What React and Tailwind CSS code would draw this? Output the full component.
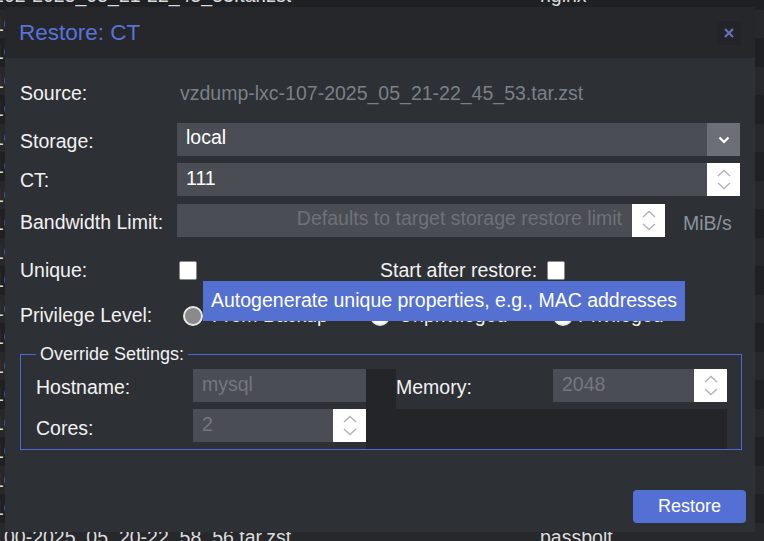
import React from "react";

const rows = [
  ["vzdump-lxc-102-2025_05_21-22_45_53.tar.zst", "nginx"],
  ["vzdump-lxc-105-2025_05_21-22_46_10.tar.zst", "gitea"],
  ["vzdump-lxc-105-2025_05_20-22_46_02.tar.zst", "gitea"],
  ["vzdump-lxc-107-2025_05_21-22_45_53.tar.zst", "mysql"],
  ["vzdump-lxc-101-2025_05_21-22_44_31.tar.zst", "pihole"],
  ["vzdump-lxc-100-2025_05_21-22_44_02.tar.zst", "passbolt"],
  ["vzdump-lxc-103-2025_05_21-22_45_11.tar.zst", "grafana"],
  ["vzdump-lxc-104-2025_05_21-22_45_40.tar.zst", "influx"],
  ["vzdump-lxc-106-2025_05_21-22_46_25.tar.zst", "nextcloud"],
  ["vzdump-lxc-108-2025_05_21-22_47_01.tar.zst", "vaultwarden"],
  ["vzdump-lxc-109-2025_05_20-22_56_44.tar.zst", "unifi"],
  ["vzdump-lxc-101-2025_05_20-22_57_12.tar.zst", "pihole"],
  ["vzdump-lxc-102-2025_05_20-22_57_40.tar.zst", "nginx"],
  ["vzdump-lxc-103-2025_05_20-22_58_02.tar.zst", "grafana"],
  ["vzdump-lxc-104-2025_05_20-22_58_20.tar.zst", "influx"],
  ["vzdump-lxc-106-2025_05_20-22_58_31.tar.zst", "nextcloud"],
  ["vzdump-lxc-107-2025_05_20-22_58_44.tar.zst", "mysql"],
  ["vzdump-lxc-108-2025_05_20-22_58_50.tar.zst", "vaultwarden"],
  ["vzdump-lxc-109-2025_05_20-22_59_03.tar.zst", "unifi"],
  ["vzdump-lxc-100-2025_05_20-22_58_56.tar.zst", "passbolt"],
];

function Spinner() {
  return (
    <div className="flex h-full w-[33px] shrink-0 flex-col items-center justify-center gap-[5px] bg-white">
      <svg width="14" height="8" viewBox="0 0 14 8" fill="none" stroke="#b3b3b3" strokeWidth="1.4">
        <path d="M1 7 L7 1.5 L13 7" />
      </svg>
      <svg width="14" height="8" viewBox="0 0 14 8" fill="none" stroke="#b3b3b3" strokeWidth="1.4">
        <path d="M1 1 L7 6.5 L13 1" />
      </svg>
    </div>
  );
}

function Field({ value, dim, spinner, className = "" }) {
  return (
    <div className={`flex h-[33px] bg-[#4a4d54] ${className}`}>
      <div className={`flex-1 truncate pl-[9px] leading-[31px] ${dim ? "text-[#74777d]" : "text-white"}`}>
        {value}
      </div>
      {spinner && <Spinner />}
    </div>
  );
}

function Checkbox() {
  return <div className="h-[19px] w-[18px] rounded-[2px] border border-[#8c8c8c] bg-white" />;
}

function Radio({ checked }) {
  return (
    <div
      className={`h-[20px] w-[20px] rounded-full border-2 border-[#e6e6e6] ${
        checked ? "bg-[#8a8a8a]" : "bg-white"
      }`}
    />
  );
}

export default function App() {
  return (
    <div className="relative h-[541px] w-[764px] overflow-hidden bg-[#1f2124] font-['Liberation_Sans',Arial,sans-serif] text-[19.5px]">
      {/* grid behind the window */}
      <div className="-mt-[19px] flex flex-col">
        {rows.map(([name, host], i) => (
          <div
            key={i}
            className={`flex h-[28.5px] shrink-0 leading-[28.5px] text-[#dcdcdc] ${
              i % 2 ? "bg-[#26282c]" : "bg-[#1e2023]"
            }`}
          >
            <div className="-ml-[112px] w-[652px] shrink-0 whitespace-nowrap">{name}</div>
            <div className="whitespace-nowrap">{host}</div>
          </div>
        ))}
      </div>

      {/* Restore dialog */}
      <div className="absolute left-[5px] top-[7px] flex h-[525px] w-[750px] flex-col bg-[#2d3035] text-[#f2f2f2]">
        <div className="flex h-[51px] shrink-0 items-center justify-between bg-[#25272b] pl-[14px] pr-[14px]">
          <div className="text-[22.5px] text-[#5a72d8]">Restore: CT</div>
          <div className="flex h-[24px] w-[24px] items-center justify-center bg-[#222428]">
            <svg width="12" height="12" viewBox="0 0 12 12" stroke="#6473b8" strokeWidth="2.2">
              <path d="M2 2 L10 10 M10 2 L2 10" />
            </svg>
          </div>
        </div>

        <div className="flex flex-1 flex-col px-[15px] pt-[19px]">
          <div className="flex h-[33px] items-center">
            <div className="w-[160px] shrink-0">Source:</div>
            <div className="text-[#7b8087]">vzdump-lxc-107-2025_05_21-22_45_53.tar.zst</div>
          </div>

          <div className="mt-[13px] flex h-[33px] items-center">
            <div className="w-[157px] shrink-0 pt-[5px]">Storage:</div>
            <div className="flex h-[33px] flex-1 bg-[#4a4d54]">
              <div className="flex-1 pl-[9px] leading-[28px] text-white">local</div>
              <div className="flex w-[33px] items-center justify-center bg-[#6c6f75]">
                <svg width="12" height="8" viewBox="0 0 12 8" fill="none" stroke="#ffffff" strokeWidth="2.2">
                  <path d="M1.5 1.5 L6 6 L10.5 1.5" />
                </svg>
              </div>
            </div>
          </div>

          <div className="mt-[7px] flex h-[33px] items-center">
            <div className="w-[157px] shrink-0 pt-[3px]">CT:</div>
            <div className="flex h-[33px] flex-1 bg-[#4a4d54]">
              <div className="flex-1 pl-[9px] leading-[31px] text-white">111</div>
              <Spinner />
            </div>
          </div>

          <div className="mt-[8px] flex h-[33px] items-center">
            <div className="w-[157px] shrink-0 pt-[4px]">Bandwidth Limit:</div>
            <div className="flex h-[33px] w-[488px] bg-[#4a4d54]">
              <div className="flex-1 pr-[10px] text-right leading-[29px] text-[#6e7177]">
                Defaults to target storage restore limit
              </div>
              <Spinner />
            </div>
            <div className="ml-[18px] pt-[7px] text-[#8a939c]">MiB/s</div>
          </div>

          <div className="mt-[17px] flex h-[33px] items-center">
            <div className="w-[159px] shrink-0">Unique:</div>
            <Checkbox />
            <div className="ml-[183px] w-[167px] shrink-0">Start after restore:</div>
            <Checkbox />
          </div>

          <div className="mt-[12px] flex h-[33px] items-center">
            <div className="w-[163px] shrink-0">Privilege Level:</div>
            <Radio checked />
            <div className="ml-[9px] w-[158px] shrink-0">From Backup</div>
            <Radio />
            <div className="ml-[9px] w-[154px] shrink-0">Unprivileged</div>
            <Radio />
            <div className="ml-[5px]">Privileged</div>
          </div>

          <fieldset className="mt-[12px] w-[722px] border border-[#4f69d4] pl-[15px] pr-[14px]">
            <legend className="px-[4px] text-[18px] leading-[20px]">Override Settings:</legend>
            <div className="mt-[5px] flex">
              <div className="flex w-[330px] shrink-0 flex-col">
                <div className="flex h-[33px] items-center">
                  <div className="w-[157px] shrink-0 pt-[4px]">Hostname:</div>
                  <Field value="mysql" dim className="w-[173px]" />
                </div>
                <div className="mt-[7px] flex h-[33px] items-center">
                  <div className="w-[157px] shrink-0 pt-[6px]">Cores:</div>
                  <Field value="2" dim spinner className="w-[173px]" />
                </div>
              </div>
              <div className="flex h-[80px] flex-1 flex-col bg-[#232529]">
                <div className="ml-[30px] flex h-[40px] items-start bg-[#2d3035]">
                  <div className="flex h-[33px] w-[157px] shrink-0 items-center pt-[4px]">Memory:</div>
                  <Field value="2048" dim spinner className="flex-1" />
                </div>
              </div>
            </div>
          </fieldset>

          <div className="mt-auto flex justify-end pb-[9px]">
            <button className="-mr-[6px] h-[33px] w-[113px] rounded-[4px] bg-[#5470d4] text-[18px] text-white">
              Restore
            </button>
          </div>
        </div>

        {/* tooltip for the Unique checkbox */}
        <div className="absolute left-[198px] top-[274px] flex h-[40px] w-[482px] items-center bg-[#5470d1] pl-[8px] text-white">
          Autogenerate unique properties, e.g., MAC addresses
        </div>
      </div>
    </div>
  );
}
